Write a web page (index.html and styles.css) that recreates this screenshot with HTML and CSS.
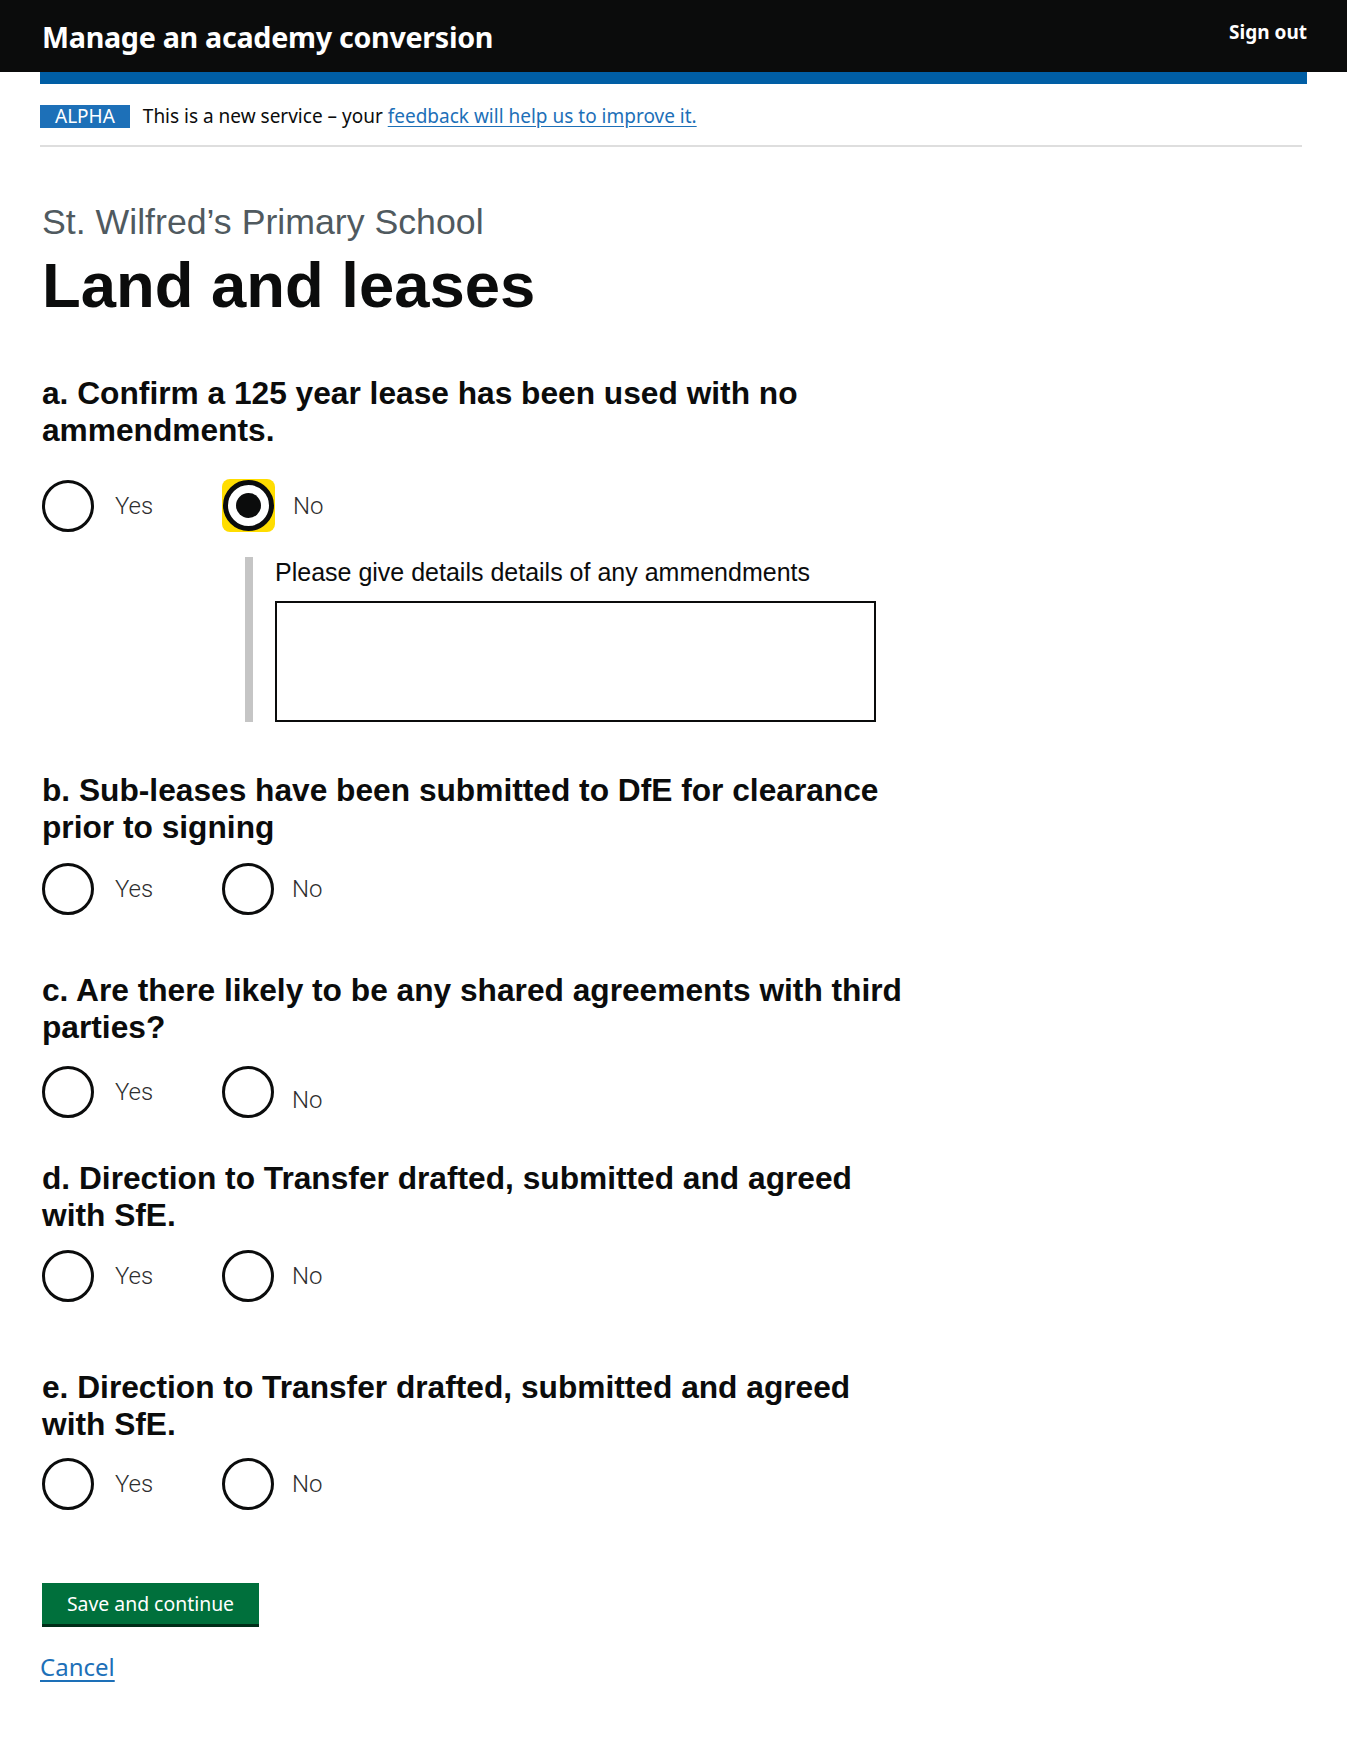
FILE: index.html
```html
<!DOCTYPE html>
<html lang="en">
<head>
<meta charset="utf-8">
<title>Land and leases - Manage an academy conversion</title>
<link rel="stylesheet" href="styles.css">
</head>
<body>
<header class="header">
  <div class="header-inner">
    <span class="service-name">Manage an academy conversion</span>
    <a class="sign-out" href="#">Sign out</a>
  </div>
</header>
<div class="blue-bar"></div>
<div class="phase">
  <strong class="tag">ALPHA</strong>
  <span class="phase-text">This is a new service – your <a class="link" href="#">feedback will help us to improve it.</a></span>
</div>

<main class="main">
  <span class="caption">St. Wilfred’s Primary School</span>
  <h1 class="title">Land and leases</h1>

  <fieldset class="question">
    <legend class="legend">a. Confirm a 125 year lease has been used with no ammendments.</legend>
    <div class="radios gap-a">
      <div class="radio-item">
        <span class="radio-circle"></span>
        <span class="radio-label">Yes</span>
      </div>
      <div class="radio-item">
        <span class="radio-focus"><span class="radio-circle checked"></span></span>
        <span class="radio-label">No</span>
      </div>
    </div>
    <div class="conditional">
      <label class="cond-label" for="details">Please give details details of any ammendments</label>
      <textarea class="textarea" id="details"></textarea>
    </div>
  </fieldset>

  <fieldset class="question q-b">
    <legend class="legend">b. Sub-leases have been submitted to DfE for clearance prior to signing</legend>
    <div class="radios gap-b">
      <div class="radio-item"><span class="radio-circle"></span><span class="radio-label">Yes</span></div>
      <div class="radio-item"><span class="radio-circle"></span><span class="radio-label">No</span></div>
    </div>
  </fieldset>

  <fieldset class="question q-c">
    <legend class="legend">c. Are there likely to be any shared agreements with third parties?</legend>
    <div class="radios gap-c">
      <div class="radio-item"><span class="radio-circle"></span><span class="radio-label">Yes</span></div>
      <div class="radio-item"><span class="radio-circle"></span><span class="radio-label low">No</span></div>
    </div>
  </fieldset>

  <fieldset class="question q-d">
    <legend class="legend">d. Direction to Transfer drafted, submitted and agreed with SfE.</legend>
    <div class="radios gap-d">
      <div class="radio-item"><span class="radio-circle"></span><span class="radio-label">Yes</span></div>
      <div class="radio-item"><span class="radio-circle"></span><span class="radio-label">No</span></div>
    </div>
  </fieldset>

  <fieldset class="question q-e">
    <legend class="legend">e. Direction to Transfer drafted, submitted and agreed with SfE.</legend>
    <div class="radios gap-e">
      <div class="radio-item"><span class="radio-circle"></span><span class="radio-label">Yes</span></div>
      <div class="radio-item"><span class="radio-circle"></span><span class="radio-label">No</span></div>
    </div>
  </fieldset>

  <button class="button" type="button">Save and continue</button>
  <a class="cancel" href="#">Cancel</a>
</main>
</body>
</html>
```

FILE: styles.css
```css
body {
  margin: 0;
  font-family: "Liberation Sans", Arial, sans-serif;
  color: #0b0c0c;
  background: #fff;
}

.header {
  background: #0b0c0c;
}

.header-inner {
  margin: 0 40px;
  height: 72px;
  display: flex;
  justify-content: space-between;
  align-items: flex-start;
}

.service-name {
  font-family: "Noto Sans", sans-serif;
  font-weight: 700;
  font-size: 28.7px;
  line-height: 40px;
  margin-top: 17px;
  padding-left: 2px;
  color: #fff;
  letter-spacing: -0.3px;
}

.sign-out {
  font-family: "Noto Sans", sans-serif;
  font-weight: 700;
  font-size: 19px;
  line-height: 26px;
  margin-top: 19px;
  color: #fff;
  text-decoration: none;
}

.blue-bar {
  margin: 0 40px;
  height: 12px;
  background: #005ea5;
}

.phase {
  margin: 0 45px 0 40px;
  padding: 21px 0 17px;
  border-bottom: 2px solid #dedede;
  display: flex;
  align-items: center;
  gap: 13px;
  font-family: "Noto Sans", sans-serif;
  font-size: 19px;
}

.tag {
  background: #1d70b8;
  color: #fff;
  font-weight: 400;
  font-size: 19px;
  line-height: 23px;
  padding: 0 15px;
}

.phase-text {
  line-height: 23px;
}

.link {
  color: #1d70b8;
  text-decoration: underline;
  text-underline-offset: 3px;
}

.main {
  margin: 0 40px 0 42px;
  padding-bottom: 60px;
}

.caption {
  display: block;
  margin-top: 55px;
  font-size: 35.7px;
  line-height: 40px;
  color: #505a5f;
}

.title {
  margin: 8px 0 55px;
  font-size: 63.4px;
  line-height: 70px;
  font-weight: 700;
}

.question {
  border: 0;
  padding: 0;
  margin: 0;
  max-width: 870px;
  min-width: 0;
}

.legend {
  padding: 0;
  font-size: 31.7px;
  line-height: 37px;
  font-weight: 700;
}

.q-b { margin-top: 50px; }
.q-c { margin-top: 57px; }
.q-d { margin-top: 42px; }
.q-e { margin-top: 67px; }

.radios {
  display: flex;
  height: 53px;
  align-items: center;
}

.gap-a { margin-top: 30px; }
.gap-b { margin-top: 16px; }
.gap-c { margin-top: 19px; }
.gap-d { margin-top: 15px; }
.gap-e { margin-top: 14px; }

.radio-item {
  display: flex;
  align-items: center;
  width: 180px;
}

.radio-circle {
  display: block;
  width: 52px;
  height: 52px;
  box-sizing: border-box;
  border: 3px solid #0b0c0c;
  border-radius: 50%;
  background: #fff;
  flex: none;
}

.radio-focus {
  display: flex;
  align-items: center;
  justify-content: center;
  width: 53px;
  height: 53px;
  background: #ffdd00;
  border-radius: 8px;
  flex: none;
}

.radio-circle.checked {
  width: 51px;
  height: 51px;
  border-width: 5px;
  display: flex;
  align-items: center;
  justify-content: center;
}

.radio-circle.checked::after {
  content: "";
  width: 25px;
  height: 25px;
  border-radius: 50%;
  background: #0b0c0c;
}

.radio-label {
  margin-left: 21px;
  font-family: Roboto, "Liberation Sans", sans-serif;
  font-weight: 300;
  font-size: 24px;
  color: #2e2e2e;
}

.radio-item + .radio-item .radio-label {
  margin-left: 18px;
}

.radio-label.low {
  margin-top: 16px;
}

.conditional {
  margin: 25px 0 0 203px;
  border-left: 8px solid #c5c5c5;
  padding-left: 22px;
}

.cond-label {
  display: block;
  font-size: 25px;
  line-height: 30px;
  margin-bottom: 14px;
}

.textarea {
  display: block;
  width: 601px;
  height: 121px;
  box-sizing: border-box;
  border: 2px solid #0b0c0c;
  resize: none;
  margin: 0;
  font: inherit;
}

.button {
  display: block;
  margin-top: 73px;
  width: 217px;
  height: 41px;
  border: 0;
  background: #00703c;
  box-shadow: 0 3px 0 #002d18;
  color: #fff;
  font-family: "Noto Sans", sans-serif;
  font-size: 19.4px;
  padding: 0;
}

.cancel {
  display: inline-block;
  margin: 28px 0 0 -2px;
  font-family: "Noto Sans", sans-serif;
  font-size: 24px;
  line-height: 30px;
  color: #1d70b8;
  text-decoration: underline;
  text-decoration-thickness: 2px;
  text-underline-offset: 4px;
}
```
